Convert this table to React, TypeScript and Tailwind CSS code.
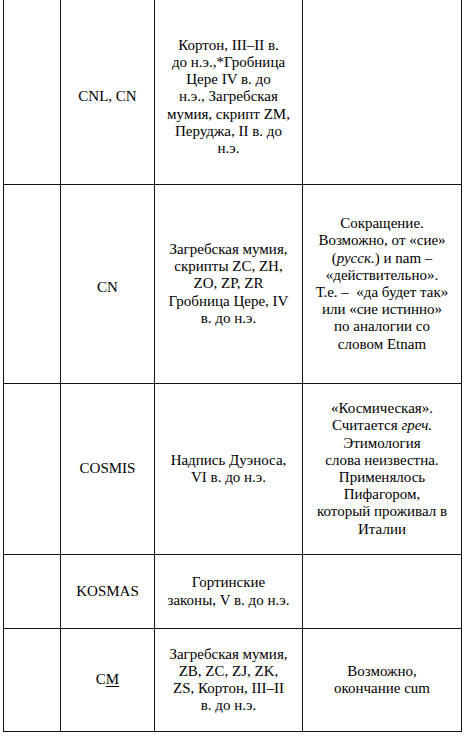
import type { ReactNode } from "react"

type Row = {
  height: string
  pad?: string
  term: ReactNode
  source: ReactNode[]
  note: ReactNode[]
}

const serif = "font-[family-name:'Liberation_Serif',Tinos,'Times_New_Roman',serif] text-[15px] leading-[17.2px] text-black"

const rows: Row[] = [
  {
    height: "h-[185px]",
    pad: "pt-[10px]",
    term: "CNL, CN",
    source: [
      "Кортон, III–II в.",
      "до н.э.,*Гробница",
      "Цере IV в. до",
      "н.э., Загребская",
      "мумия, скрипт ZM,",
      "Перуджа, II в. до",
      "н.э.",
    ],
    note: [],
  },
  {
    height: "h-[199px]",
    pad: "pt-[8px]",
    term: "CN",
    source: [
      "Загребская мумия,",
      "скрипты ZC, ZH,",
      "ZO, ZP, ZR",
      "Гробница Цере, IV",
      "в. до н.э.",
    ],
    note: [
      "Сокращение.",
      "Возможно, от «сие»",
      <>
        (<i>русск.</i>) и nam –
      </>,
      "«действительно».",
      "Т.е. –\u00a0 «да будет так»",
      "или «сие истинно»",
      "по аналогии со",
      "словом Etnam",
    ],
  },
  {
    height: "h-[171px]",
    term: "COSMIS",
    source: ["Надпись Дуэноса,", "VI в. до н.э."],
    note: [
      "«Космическая».",
      <>
        Считается <i>греч.</i>
      </>,
      "Этимология",
      "слова неизвестна.",
      "Применялось",
      "Пифагором,",
      "который проживал в",
      "Италии",
    ],
  },
  {
    height: "h-[74px]",
    term: "KOSMAS",
    source: ["Гортинские", "законы, V в. до н.э."],
    note: [],
  },
  {
    height: "h-[103px]",
    term: (
      <>
        C<u className="underline-offset-2">M</u>
      </>
    ),
    source: [
      "Загребская мумия,",
      "ZB, ZC, ZJ, ZK,",
      "ZS, Кортон, III–II",
      "в. до н.э.",
    ],
    note: ["Возможно,", "окончание cum"],
  },
]

function Lines({ items }: { items: ReactNode[] }) {
  return (
    <div className="flex flex-col items-center">
      {items.map((line, i) => (
        <p key={i} className={`whitespace-pre ${serif}`}>
          {line}
        </p>
      ))}
    </div>
  )
}

export default function App() {
  const cell = "flex items-center justify-center text-center border-r border-b border-[#111]"
  return (
    <div className="min-h-[736px] bg-white font-[family-name:'Liberation_Serif',Tinos,'Times_New_Roman',serif]">
      <div className="ml-[3px] w-[459px] border-l border-[#111]">
        {rows.map((row, idx) => (
          <div key={idx} className={`grid grid-cols-[57px_94px_148px_159px] ${row.height}`}>
            <div className={`${cell} ${idx === 0 ? "pt-[10px]" : ""}`} />
            <div className={`${cell} ${row.pad ?? ""}`}>
              <p className={serif}>{row.term}</p>
            </div>
            <div className={`${cell} ${idx === 0 ? "pt-[10px]" : ""}`}>
              <Lines items={row.source} />
            </div>
            <div className={`${cell} ${idx === 0 ? "pt-[10px]" : ""}`}>
              <Lines items={row.note} />
            </div>
          </div>
        ))}
      </div>
    </div>
  )
}
